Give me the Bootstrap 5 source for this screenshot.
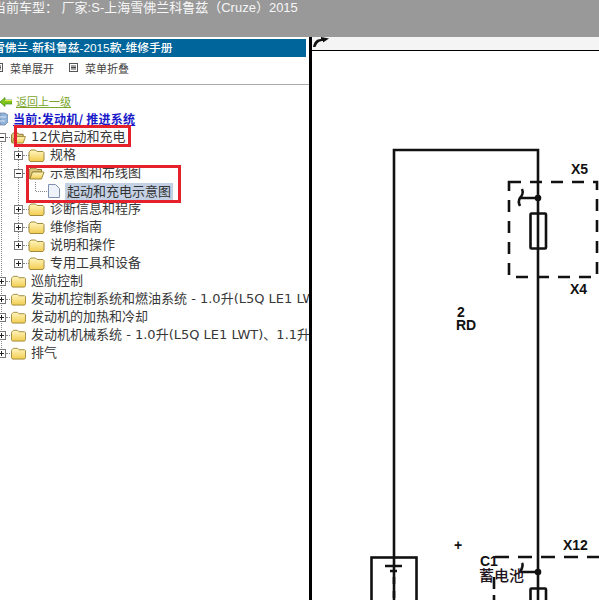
<!DOCTYPE html>
<html lang="zh">
<head>
<meta charset="utf-8">
<title>维修手册</title>
<link rel="stylesheet" href="https://cdn.jsdelivr.net/npm/bootstrap@5.3.0/dist/css/bootstrap.min.css">
<style>
html,body{height:600px;overflow:hidden;background:#fff}
body{font-family:"DejaVu Sans","Noto Sans CJK SC",sans-serif;font-size:13px;color:#383838}
.topbar{height:37px;background:#999;color:#f6f6f6;font:13px/15px "Liberation Sans","Noto Sans CJK SC",sans-serif;white-space:nowrap}
.topbar span{display:block;margin-left:-7px}
.mainarea{height:563px}
.leftpane{width:309px;flex:none;overflow:hidden;position:relative;padding-top:2px}
.titlebar{width:306px;height:18px;background:#00659b;color:#fff;font:500 11.8px/18px "Liberation Sans","Noto Sans CJK SC",sans-serif;white-space:nowrap;overflow:hidden}
.titlebar span{display:block;margin-left:-7px}
.menurow{height:28px;padding-bottom:6px;font:11px/22px "Noto Sans CJK SC",sans-serif;border-bottom:1px solid #aaa;color:#444;white-space:nowrap}
.menuone{display:flex;align-items:center;gap:7px;margin-left:-6px;width:75px}
.menuone svg{flex:none}
.backline{height:15px;margin-top:9px;font:11px/15px "Noto Sans CJK SC",sans-serif;color:#7aa62c;gap:4px}
.backline a{color:#7aa62c}
.curline{height:17px;margin-top:1px;margin-bottom:1px;font:700 12px/17px "Noto Sans CJK SC",sans-serif;letter-spacing:.25px;gap:5px}
.curline a{color:#1a1ac8}
.treeroot,.treesub{list-style:none;margin:0;padding:0;background-repeat:no-repeat}
.treeroot{background-image:repeating-linear-gradient(#888 0 1px,transparent 1px 2px);background-size:1px 215px;background-position:1px 5px}
.treesub{background-image:repeating-linear-gradient(#888 0 1px,transparent 1px 2px);background-size:1px 104px;background-position:18px 0}
.treerow{height:18px;display:flex;align-items:center;white-space:nowrap}
.treerow svg{flex:none}
.rowzero{margin-left:-3px}
.rowone{margin-left:14px}
.rowtwo{margin-left:35px}
.dots{width:6px;height:0;border-top:1px dotted #888;flex:none}
.rowzero .folder,.rowone .folder{margin-left:-1px}
.label{margin-left:5px;line-height:18px}
.nodecon{flex:none}
.picked{margin-left:5px;background:#c4d1e4;color:#333;padding:0 2px;line-height:17px;height:17px}
.redbox{position:absolute;border:3px solid #e5222b;pointer-events:none}
.redone{left:14px;top:88px;width:117px;height:22px}
.redtwo{left:26px;top:128px;width:155px;height:38px}
.divider{width:3px;background:#000;flex:none}
.rightpane{min-width:0}
.striptop{height:14px;background:#f4f4f4;border-bottom:1px solid #000;overflow:hidden}
.wirepic{display:block}
.wirepic text{font-family:"Liberation Sans",sans-serif;font-weight:700;font-size:14px;fill:#111}
.wirepic .cnlabel{font-family:"Noto Sans CJK SC",sans-serif;font-weight:500;font-size:15px;fill:#1d1420}
</style>
</head>
<body>
<svg width="0" height="0" class="position-absolute">
  <defs>
    <linearGradient id="fy" x1="0" y1="0" x2="0" y2="1"><stop offset="0" stop-color="#fff6c0"/><stop offset="1" stop-color="#f2cc4e"/></linearGradient>
    <symbol id="fold" viewBox="0 0 16 14"><path d="M1 3.500 2.500 2H7l1.500 1.500H14.500L15.500 4.500V12l-1 1.500H1.500L.5 12V4z" fill="url(#fy)" stroke="#a08a3c"/></symbol>
    <symbol id="foldopen" viewBox="0 0 16 14"><path d="M1 3.500 2.500 2H7l1.500 1.500H13V6H4L1.500 13 .5 12V4z" fill="#d8c47a" stroke="#8a7430"/><path d="M1.500 13 4 6h11.500L13 13z" fill="url(#fy)" stroke="#a08a3c"/></symbol>
    <symbol id="plus" viewBox="0 0 9 9"><rect x=".5" y=".5" width="8" height="8" fill="#fff" stroke="#777"/><path d="M2 4.500h5M4.500 2v5" stroke="#222"/></symbol>
    <symbol id="minus" viewBox="0 0 9 9"><rect x=".5" y=".5" width="8" height="8" fill="#fff" stroke="#777"/><path d="M2 4.500h5" stroke="#222"/></symbol>
    <symbol id="menubox" viewBox="0 0 9 9"><rect x=".5" y=".5" width="8" height="8" fill="#fff" stroke="#555"/><path d="M2 3h5M2 4.500h5M2 6h5" stroke="#444"/></symbol>
  </defs>
</svg>

<div class="topbar"><span>当前车型： 厂家:S-上海雪佛兰科鲁兹（Cruze）2015</span></div>

<div class="mainarea d-flex">
  <div class="leftpane">
    <div class="titlebar"><span>雪佛兰-新科鲁兹-2015款-维修手册</span></div>
    <div class="menurow d-flex align-items-center">
      <div class="menuone"><svg width="9" height="9"><use href="#menubox"/></svg><span>菜单展开</span></div>
      <div class="menuone ms-0"><svg width="9" height="9"><use href="#menubox"/></svg><span>菜单折叠</span></div>
    </div>
    <div class="backline d-flex align-items-center">
      <svg width="12" height="10" viewBox="0 0 12 10"><path d="M0 5 5 .5V3h7v4H5v2.500z" fill="#7fc31c" stroke="#3e8a12" stroke-width=".7"/><path d="M5 3.500h7" stroke="#e4e84a"/></svg>
      <a href="#">返回上一级</a>
    </div>
    <div class="curline d-flex align-items-center">
      <svg width="8" height="14" viewBox="0 0 8 14"><path d="M0 1h5l3 2v7l-3 3H0z" fill="#8fb2d8" stroke="#6a7fa5" stroke-width=".7"/><path d="M0 5h6M0 9h5" stroke="#dce8f6"/></svg>
      <a href="#">当前:发动机/ 推进系统</a>
    </div>
    <ul class="treeroot">
      <li>
        <div class="treerow rowzero"><svg width="9" height="9"><use href="#minus"/></svg><span class="dots"></span><svg class="folder" width="15" height="13"><use href="#foldopen"/></svg><span class="label">12伏启动和充电</span></div>
        <ul class="treesub">
          <li class="treerow rowone"><svg width="9" height="9"><use href="#plus"/></svg><span class="dots"></span><svg class="folder" width="17" height="14"><use href="#fold"/></svg><span class="label">规格</span></li>
          <li class="treerow rowone"><svg width="9" height="9"><use href="#minus"/></svg><span class="dots"></span><svg class="folder" width="17" height="14"><use href="#foldopen"/></svg><span class="label">示意图和布线图</span></li>
          <li class="treerow rowtwo"><svg class="nodecon" width="13" height="18" viewBox="0 0 13 18"><path d="M.5 0v9.500H13" fill="none" stroke="#888" stroke-dasharray="1 1"/></svg><svg width="12" height="14" viewBox="0 0 12 14"><path d="M.5.500h7l4 4v9H.5z" fill="#eef3fb" stroke="#7f8fae"/></svg><span class="picked">起动和充电示意图</span></li>
          <li class="treerow rowone"><svg width="9" height="9"><use href="#plus"/></svg><span class="dots"></span><svg class="folder" width="17" height="14"><use href="#fold"/></svg><span class="label">诊断信息和程序</span></li>
          <li class="treerow rowone"><svg width="9" height="9"><use href="#plus"/></svg><span class="dots"></span><svg class="folder" width="17" height="14"><use href="#fold"/></svg><span class="label">维修指南</span></li>
          <li class="treerow rowone"><svg width="9" height="9"><use href="#plus"/></svg><span class="dots"></span><svg class="folder" width="17" height="14"><use href="#fold"/></svg><span class="label">说明和操作</span></li>
          <li class="treerow rowone"><svg width="9" height="9"><use href="#plus"/></svg><span class="dots"></span><svg class="folder" width="17" height="14"><use href="#fold"/></svg><span class="label">专用工具和设备</span></li>
        </ul>
      </li>
      <li class="treerow rowzero"><svg width="9" height="9"><use href="#plus"/></svg><span class="dots"></span><svg class="folder" width="15" height="14"><use href="#fold"/></svg><span class="label">巡航控制</span></li>
      <li class="treerow rowzero"><svg width="9" height="9"><use href="#plus"/></svg><span class="dots"></span><svg class="folder" width="15" height="14"><use href="#fold"/></svg><span class="label">发动机控制系统和燃油系统 - 1.0升(L5Q LE1 LWT)、1.1升</span></li>
      <li class="treerow rowzero"><svg width="9" height="9"><use href="#plus"/></svg><span class="dots"></span><svg class="folder" width="15" height="14"><use href="#fold"/></svg><span class="label">发动机的加热和冷却</span></li>
      <li class="treerow rowzero"><svg width="9" height="9"><use href="#plus"/></svg><span class="dots"></span><svg class="folder" width="15" height="14"><use href="#fold"/></svg><span class="label">发动机机械系统 - 1.0升(L5Q LE1 LWT)、1.1升(L5Q)</span></li>
      <li class="treerow rowzero"><svg width="9" height="9"><use href="#plus"/></svg><span class="dots"></span><svg class="folder" width="15" height="14"><use href="#fold"/></svg><span class="label">排气</span></li>
    </ul>
    <div class="redbox redone"></div>
    <div class="redbox redtwo"></div>
  </div>
  <div class="divider"></div>
  <div class="rightpane flex-grow-1">
    <div class="striptop">
      <svg width="20" height="13" viewBox="0 0 20 13" class="d-block"><path d="M1 10C2 5 4 2 9 2V0l8 1.500-6 4V4C7 4 5 6 3.500 10z" fill="#111"/></svg>
    </div>
    <svg class="wirepic" width="287" height="549" viewBox="312 51 287 549">
      <g fill="none" stroke="#111" stroke-width="2.600">
        <path d="M394 600V557M394 557V150H538V600"/>
        <rect x="530.500" y="213.500" width="15.500" height="35" rx="1"/>
        <path d="M509 182H597V277H509z" stroke-dasharray="12 9"/>
        <path d="M521 198H538M522 189c2 4-1 8-2 9-2 3-1 6 0 8"/>
        <rect x="371.500" y="557.500" width="45" height="50"/>
        <path d="M495 557H599" stroke-dasharray="14 9"/>
        <path d="M385 566H402M390 571H397"/>
        <path d="M394 577V600" stroke-dasharray="7 7"/>
        <path d="M494 577V600" stroke-dasharray="12 6"/>
        <path d="M521 572H538M522 563c2 3-1 7-2 9"/>
        <rect x="530.500" y="588.500" width="15.500" height="30" rx="1"/>
      </g>
      <circle cx="538" cy="198" r="3.300" fill="#111"/>
      <circle cx="538" cy="572" r="3.300" fill="#111"/>
      <text x="571" y="174">X5</text>
      <text x="570" y="294">X4</text>
      <text x="457" y="317">2</text>
      <text x="456" y="330">RD</text>
      <text x="454" y="550">+</text>
      <text x="563" y="550">X12</text>
      <text x="480" y="566">C1</text>
      <text class="cnlabel" x="479" y="581">蓄电池</text>
    </svg>
  </div>
</div>
<script src="https://cdn.jsdelivr.net/npm/bootstrap@5.3.0/dist/js/bootstrap.bundle.min.js"></script>
</body>
</html>
